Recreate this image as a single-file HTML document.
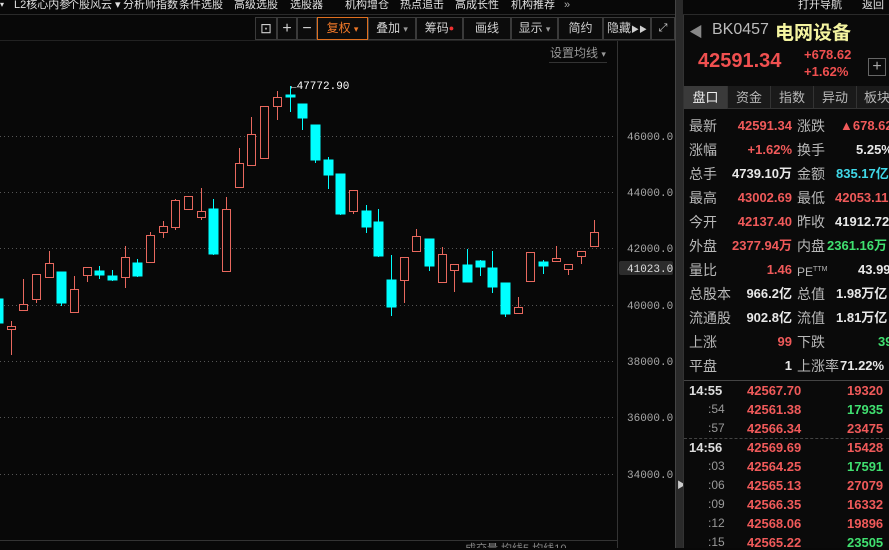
<!DOCTYPE html>
<html><head><meta charset="utf-8">
<style>
*{margin:0;padding:0;box-sizing:border-box}
body{width:889px;height:548px;background:#080808;overflow:hidden;position:relative;font-family:"Liberation Sans","Noto Sans CJK SC",sans-serif;color:#ccc}
.a{position:absolute;white-space:nowrap}
.menu{font-size:11px;color:#e0e0e0;top:-2px;line-height:14px}
.tb{position:absolute;top:17px;height:23px;border:1px solid #3a3a3a;font-size:12px;color:#d0d0d0;text-align:center;line-height:21px;background:#0c0c0c}
.lbl{color:#b8b8b8;font-size:14px;line-height:18px}
.r{color:#f05a5a}
.g{color:#40e070}
.w{color:#e8e8e8}
.c{color:#40d8e8}
.v{font-size:13px;font-weight:bold;text-align:right;line-height:18px}
</style></head><body>
<!-- menu -->
<div class="a menu" style="left:0;font-size:8px">▾</div>
<div class="a menu" style="left:14px">L2核心内参</div>
<div class="a menu" style="left:68px">个股风云 ▾</div>
<div class="a menu" style="left:123px">分析师指数</div>
<div class="a menu" style="left:179px">条件选股</div>
<div class="a menu" style="left:234px">高级选股</div>
<div class="a menu" style="left:290px">选股器</div>
<div class="a menu" style="left:345px">机构增仓</div>
<div class="a menu" style="left:400px">热点追击</div>
<div class="a menu" style="left:455px">高成长性</div>
<div class="a menu" style="left:511px">机构推荐</div>
<div class="a menu" style="left:564px;color:#aaa">»</div>
<div class="a menu" style="left:798px">打开导航</div>
<div class="a menu" style="left:862px">返回</div>
<div class="a" style="left:0;top:14px;width:889px;height:1px;background:#2a2a2a"></div>
<!-- toolbar -->
<div class="tb" style="left:255px;width:22px;font-size:14px">⊡</div>
<div class="tb" style="left:277px;width:20px;font-size:16px">+</div>
<div class="tb" style="left:297px;width:20px;font-size:16px">−</div>
<div class="tb" style="left:317px;width:51px;border-color:#e07020;color:#f07828">复权 <span style="font-size:9px">▾</span></div>
<div class="tb" style="left:368px;width:48px">叠加 <span style="font-size:9px;color:#999">▾</span></div>
<div class="tb" style="left:416px;width:47px">筹码<span style="color:#f03030;font-size:9px;vertical-align:top">●</span></div>
<div class="tb" style="left:463px;width:48px">画线</div>
<div class="tb" style="left:511px;width:47px">显示 <span style="font-size:9px;color:#999">▾</span></div>
<div class="tb" style="left:558px;width:45px">简约</div>
<div class="tb" style="left:603px;width:48px">隐藏<span style="font-size:8px">▶▶</span></div>
<div class="tb" style="left:651px;width:24px;font-size:11px">⤢</div>
<div class="a" style="left:0;top:40px;width:675px;height:1px;background:#222"></div>
<div class="a" style="left:550px;top:44px;font-size:12px;color:#999">设置均线 <span style="font-size:9px">▾</span></div>
<div class="a" style="left:549px;top:62px;width:58px;height:1px;background:#333"></div>
<!-- chart -->
<svg class="a" style="left:0;top:0" width="676" height="548">
<g stroke="#555" stroke-dasharray="1 3" stroke-width="1">
<line x1="0" y1="136.5" x2="615" y2="136.5"/><line x1="0" y1="192.5" x2="615" y2="192.5"/><line x1="0" y1="248.5" x2="615" y2="248.5"/><line x1="0" y1="305.5" x2="615" y2="305.5"/><line x1="0" y1="361.5" x2="615" y2="361.5"/><line x1="0" y1="417.5" x2="615" y2="417.5"/><line x1="0" y1="474.5" x2="615" y2="474.5"/>
</g>
<line x1="617.5" y1="41" x2="617.5" y2="548" stroke="#333"/>
<line x1="0" y1="540.5" x2="617" y2="540.5" stroke="#333"/>
<g font-family="Liberation Mono,monospace" font-size="11" fill="#a8a8a8">
<text x="627" y="140">46000.0</text><text x="627" y="196">44000.0</text><text x="627" y="252">42000.0</text><text x="627" y="309">40000.0</text><text x="627" y="365">38000.0</text><text x="627" y="421">36000.0</text><text x="627" y="478">34000.0</text>
</g>
<rect x="619" y="261" width="54" height="14" fill="#2c2c2c" rx="2"/>
<text x="627" y="272" font-family="Liberation Mono,monospace" font-size="11" fill="#ddd">41023.0</text>
<text x="290" y="89" font-family="Liberation Mono,monospace" font-size="11" fill="#fff">←47772.90</text>
<g stroke-width="1">
<g fill="#00ffff" stroke="#00ffff">
<rect x="0" y="299" width="3" height="24"/>
<line x1="61.5" y1="272" x2="61.5" y2="306"/><rect x="57" y="272" width="9" height="31"/>
<line x1="99.5" y1="266" x2="99.5" y2="279"/><rect x="95" y="271" width="9" height="4"/>
<line x1="112.5" y1="270" x2="112.5" y2="281"/><rect x="108" y="276" width="9" height="4"/>
<line x1="137.5" y1="259" x2="137.5" y2="277"/><rect x="133" y="263" width="9" height="13"/>
<line x1="213.5" y1="199" x2="213.5" y2="255"/><rect x="209" y="209" width="9" height="45"/>
<line x1="290.5" y1="86" x2="290.5" y2="112"/><rect x="286" y="95" width="9" height="2"/>
<line x1="302.5" y1="104" x2="302.5" y2="130"/><rect x="298" y="104" width="9" height="14"/>
<line x1="315.5" y1="125" x2="315.5" y2="163"/><rect x="311" y="125" width="9" height="35"/>
<line x1="328.5" y1="157" x2="328.5" y2="189"/><rect x="324" y="160" width="9" height="15"/>
<line x1="340.5" y1="174" x2="340.5" y2="215"/><rect x="336" y="174" width="9" height="40"/>
<line x1="366.5" y1="205" x2="366.5" y2="233"/><rect x="362" y="211" width="9" height="16"/>
<line x1="378.5" y1="209" x2="378.5" y2="257"/><rect x="374" y="222" width="9" height="34"/>
<line x1="391.5" y1="255" x2="391.5" y2="316"/><rect x="387" y="280" width="9" height="27"/>
<line x1="429.5" y1="239" x2="429.5" y2="271"/><rect x="425" y="239" width="9" height="27"/>
<line x1="467.5" y1="249" x2="467.5" y2="282"/><rect x="463" y="265" width="9" height="17"/>
<line x1="480.5" y1="260" x2="480.5" y2="276"/><rect x="476" y="261" width="9" height="6"/>
<line x1="492.5" y1="251" x2="492.5" y2="293"/><rect x="488" y="268" width="9" height="19"/>
<line x1="505.5" y1="283" x2="505.5" y2="317"/><rect x="501" y="283" width="9" height="31"/>
<line x1="543.5" y1="260" x2="543.5" y2="274"/><rect x="539" y="262" width="9" height="4"/>
</g>
<g fill="#080808" stroke="#e8685e">
<line x1="11.5" y1="321" x2="11.5" y2="355"/><rect x="7.5" y="326.5" width="8" height="3"/>
<line x1="23.5" y1="279" x2="23.5" y2="304"/><rect x="19.5" y="304.5" width="8" height="6"/>
<line x1="36.5" y1="274" x2="36.5" y2="303"/><rect x="32.5" y="274.5" width="8" height="25"/>
<line x1="49.5" y1="251" x2="49.5" y2="263"/><rect x="45.5" y="263.5" width="8" height="14"/>
<line x1="74.5" y1="276" x2="74.5" y2="289"/><rect x="70.5" y="289.5" width="8" height="23"/>
<line x1="87.5" y1="275" x2="87.5" y2="282"/><rect x="83.5" y="267.5" width="8" height="8"/>
<line x1="125.5" y1="246" x2="125.5" y2="288"/><rect x="121.5" y="257.5" width="8" height="20"/>
<line x1="150.5" y1="232" x2="150.5" y2="236"/><rect x="146.5" y="235.5" width="8" height="27"/>
<line x1="163.5" y1="221" x2="163.5" y2="238"/><rect x="159.5" y="226.5" width="8" height="6"/>
<line x1="175.5" y1="199" x2="175.5" y2="230"/><rect x="171.5" y="200.5" width="8" height="27"/>
<rect x="184.5" y="196.5" width="8" height="13"/>
<line x1="201.5" y1="188" x2="201.5" y2="220"/><rect x="197.5" y="211.5" width="8" height="6"/>
<line x1="226.5" y1="197" x2="226.5" y2="209"/><rect x="222.5" y="209.5" width="8" height="62"/>
<line x1="239.5" y1="148" x2="239.5" y2="163"/><rect x="235.5" y="163.5" width="8" height="24"/>
<line x1="251.5" y1="117" x2="251.5" y2="134"/><rect x="247.5" y="134.5" width="8" height="31"/>
<rect x="260.5" y="106.5" width="8" height="52"/>
<line x1="277.5" y1="91" x2="277.5" y2="120"/><rect x="273.5" y="97.5" width="8" height="9"/>
<line x1="353.5" y1="190" x2="353.5" y2="214"/><rect x="349.5" y="190.5" width="8" height="21"/>
<line x1="404.5" y1="257" x2="404.5" y2="303"/><rect x="400.5" y="257.5" width="8" height="23"/>
<line x1="416.5" y1="229" x2="416.5" y2="236"/><rect x="412.5" y="236.5" width="8" height="15"/>
<line x1="442.5" y1="247" x2="442.5" y2="254"/><rect x="438.5" y="254.5" width="8" height="28"/>
<line x1="454.5" y1="270" x2="454.5" y2="292"/><rect x="450.5" y="264.5" width="8" height="6"/>
<line x1="518.5" y1="297" x2="518.5" y2="307"/><rect x="514.5" y="307.5" width="8" height="6"/>
<rect x="526.5" y="252.5" width="8" height="29"/>
<line x1="556.5" y1="246" x2="556.5" y2="258"/><rect x="552.5" y="258.5" width="8" height="3"/>
<line x1="568.5" y1="269" x2="568.5" y2="275"/><rect x="564.5" y="264.5" width="8" height="5"/>
<line x1="581.5" y1="256" x2="581.5" y2="264"/><rect x="577.5" y="251.5" width="8" height="5"/>
<line x1="594.5" y1="220" x2="594.5" y2="232"/><rect x="590.5" y="232.5" width="8" height="14"/>
</g>
</g>
<text x="465" y="552" font-size="11" fill="#888">成交量 均线5 均线10</text>
</svg>
<!-- scrollbar -->
<div class="a" style="left:675px;top:0;width:8px;height:548px;background:#2a2a2a;border-left:1px solid #444"></div>
<div class="a" style="left:677px;top:478px;font-size:9px;color:#ccc">▶</div>
<!-- right panel -->
<div class="a" style="left:683px;top:15px;width:206px;height:533px;background:#0a0a0a;border-left:1px solid #333"></div>
<div class="a" style="left:689px;top:22px;font-size:14px;color:#888">◀</div>
<div class="a" style="left:712px;top:21px;font-size:16px;color:#bbb">BK0457</div>
<div class="a" style="left:775px;top:18px;font-size:19px;font-weight:bold;color:#f4f4a0">电网设备</div>
<div class="a" style="left:698px;top:50px;font-size:20px;font-weight:bold;color:#f05050">42591.34</div>
<div class="a" style="left:804px;top:47px;font-size:13px;font-weight:bold;color:#f05050">+678.62</div>
<div class="a" style="left:804px;top:64px;font-size:13px;font-weight:bold;color:#f05050">+1.62%</div>
<div class="a" style="left:868px;top:58px;width:18px;height:18px;border:1px solid #666;color:#aaa;font-size:16px;line-height:15px;text-align:center">+</div>
<div class="a" style="left:684px;top:86px;width:205px;height:23px;background:#1a1a1a;border-bottom:1px solid #333"></div>
<div class="a" style="left:684px;top:86px;width:43px;height:23px;background:#3a3a3a;color:#eee;font-size:13px;text-align:center;line-height:23px">盘口</div>
<div class="a lbl" style="left:736px;top:89px;font-size:13px">资金</div>
<div class="a lbl" style="left:779px;top:89px;font-size:13px">指数</div>
<div class="a lbl" style="left:822px;top:89px;font-size:13px">异动</div>
<div class="a lbl" style="left:864px;top:89px;font-size:13px">板块</div>
<div class="a" style="left:770px;top:86px;width:1px;height:23px;background:#333"></div>
<div class="a" style="left:813px;top:86px;width:1px;height:23px;background:#333"></div>
<div class="a" style="left:856px;top:86px;width:1px;height:23px;background:#333"></div>
<div class="a" style="left:727px;top:86px;width:1px;height:23px;background:#333"></div>

<div class="a lbl" style="left:689px;top:117px">最新</div><div class="a v r" style="right:97px;top:117px">42591.34</div><div class="a lbl" style="left:797px;top:117px">涨跌</div><div class="a v r" style="left:840px;top:117px">▲678.62</div>
<div class="a lbl" style="left:689px;top:141px">涨幅</div><div class="a v r" style="right:97px;top:141px">+1.62%</div><div class="a lbl" style="left:797px;top:141px">换手</div><div class="a v w" style="left:856px;top:141px">5.25%</div>
<div class="a lbl" style="left:689px;top:165px">总手</div><div class="a v w" style="right:97px;top:165px">4739.10万</div><div class="a lbl" style="left:797px;top:165px">金额</div><div class="a v c" style="left:836px;top:165px">835.17亿</div>
<div class="a lbl" style="left:689px;top:189px">最高</div><div class="a v r" style="right:97px;top:189px">43002.69</div><div class="a lbl" style="left:797px;top:189px">最低</div><div class="a v r" style="left:835px;top:189px">42053.11</div>
<div class="a lbl" style="left:689px;top:213px">今开</div><div class="a v r" style="right:97px;top:213px">42137.40</div><div class="a lbl" style="left:797px;top:213px">昨收</div><div class="a v w" style="left:835px;top:213px">41912.72</div>
<div class="a lbl" style="left:689px;top:237px">外盘</div><div class="a v r" style="right:97px;top:237px">2377.94万</div><div class="a lbl" style="left:797px;top:237px">内盘</div><div class="a v g" style="left:827px;top:237px">2361.16万</div>
<div class="a lbl" style="left:689px;top:261px">量比</div><div class="a v r" style="right:97px;top:261px">1.46</div><div class="a lbl" style="left:797px;top:261px;font-size:12px">PE<sup style="font-size:7px">TTM</sup></div><div class="a v w" style="left:858px;top:261px">43.99</div>
<div class="a lbl" style="left:689px;top:285px">总股本</div><div class="a v w" style="right:97px;top:285px">966.2亿</div><div class="a lbl" style="left:797px;top:285px">总值</div><div class="a v w" style="left:836px;top:285px">1.98万亿</div>
<div class="a lbl" style="left:689px;top:309px">流通股</div><div class="a v w" style="right:97px;top:309px">902.8亿</div><div class="a lbl" style="left:797px;top:309px">流值</div><div class="a v w" style="left:836px;top:309px">1.81万亿</div>
<div class="a lbl" style="left:689px;top:333px">上涨</div><div class="a v r" style="right:97px;top:333px">99</div><div class="a lbl" style="left:797px;top:333px">下跌</div><div class="a v g" style="left:878px;top:333px">39</div>
<div class="a lbl" style="left:689px;top:357px">平盘</div><div class="a v w" style="right:97px;top:357px">1</div><div class="a lbl" style="left:797px;top:357px">上涨率</div><div class="a v w" style="left:840px;top:357px">71.22%</div>
<div class="a" style="left:684px;top:380px;width:205px;height:1px;background:#444"></div>
<div class="a" style="left:684px;top:438px;width:205px;border-top:1px dashed #444"></div>
<div style="position:absolute;left:0;top:0;font-size:13px;font-weight:bold;font-family:'Liberation Sans',sans-serif">
<div class="a w" style="left:689px;top:383px;color:#ddd">14:55</div><div class="a r" style="left:747px;top:383px">42567.70</div><div class="a r" style="left:847px;top:383px">19320</div>
<div class="a" style="left:708px;top:402px;color:#999;font-weight:normal;font-size:12px">:54</div><div class="a r" style="left:747px;top:402px">42561.38</div><div class="a g" style="left:847px;top:402px">17935</div>
<div class="a" style="left:708px;top:421px;color:#999;font-weight:normal;font-size:12px">:57</div><div class="a r" style="left:747px;top:421px">42566.34</div><div class="a r" style="left:847px;top:421px">23475</div>
<div class="a w" style="left:689px;top:440px;color:#ddd">14:56</div><div class="a r" style="left:747px;top:440px">42569.69</div><div class="a r" style="left:847px;top:440px">15428</div>
<div class="a" style="left:708px;top:459px;color:#999;font-weight:normal;font-size:12px">:03</div><div class="a r" style="left:747px;top:459px">42564.25</div><div class="a g" style="left:847px;top:459px">17591</div>
<div class="a" style="left:708px;top:478px;color:#999;font-weight:normal;font-size:12px">:06</div><div class="a r" style="left:747px;top:478px">42565.13</div><div class="a r" style="left:847px;top:478px">27079</div>
<div class="a" style="left:708px;top:497px;color:#999;font-weight:normal;font-size:12px">:09</div><div class="a r" style="left:747px;top:497px">42566.35</div><div class="a r" style="left:847px;top:497px">16332</div>
<div class="a" style="left:708px;top:516px;color:#999;font-weight:normal;font-size:12px">:12</div><div class="a r" style="left:747px;top:516px">42568.06</div><div class="a r" style="left:847px;top:516px">19896</div>
<div class="a" style="left:708px;top:535px;color:#999;font-weight:normal;font-size:12px">:15</div><div class="a r" style="left:747px;top:535px">42565.22</div><div class="a g" style="left:847px;top:535px">23505</div>
</div>
</body></html>
